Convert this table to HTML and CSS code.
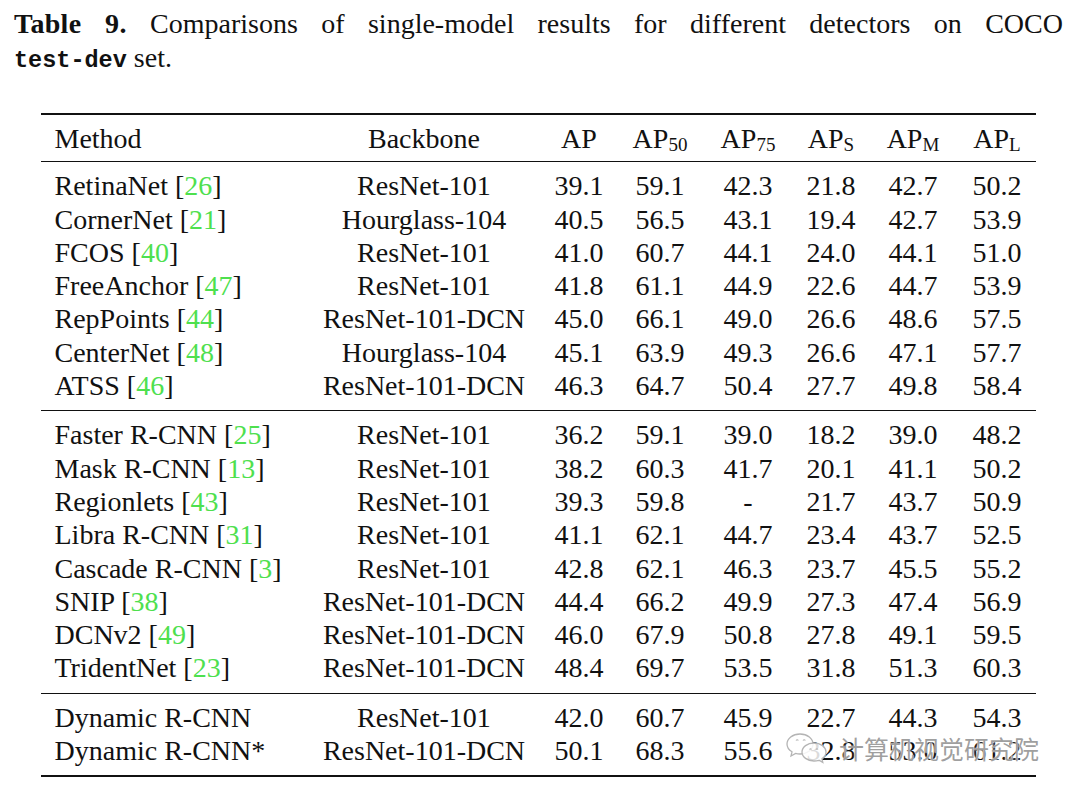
FILE: index.html
```html
<!DOCTYPE html>
<html lang="en">
<head>
<meta charset="utf-8">
<title>Table 9</title>
<link rel="stylesheet" href="styles.css">
</head>
<body>
<div class="page">
  <p class="caption"><span class="cap-line"><b class="cap-label">Table 9.</b> Comparisons of single-model results for different detectors on COCO</span><code class="tt">test-dev</code> set.</p>

  <div class="table">
    <div class="thead row">
      <div class="cell method">Method</div>
      <div class="cell">Backbone</div>
      <div class="cell">AP</div>
      <div class="cell">AP<sub>50</sub></div>
      <div class="cell">AP<sub>75</sub></div>
      <div class="cell">AP<sub>S</sub></div>
      <div class="cell">AP<sub>M</sub></div>
      <div class="cell">AP<sub>L</sub></div>
    </div>

    <div class="tgroup">
      <div class="row"><div class="cell method">RetinaNet [<span class="cite">26</span>]</div><div class="cell">ResNet-101</div><div class="cell">39.1</div><div class="cell">59.1</div><div class="cell">42.3</div><div class="cell">21.8</div><div class="cell">42.7</div><div class="cell">50.2</div></div>
      <div class="row"><div class="cell method">CornerNet [<span class="cite">21</span>]</div><div class="cell">Hourglass-104</div><div class="cell">40.5</div><div class="cell">56.5</div><div class="cell">43.1</div><div class="cell">19.4</div><div class="cell">42.7</div><div class="cell">53.9</div></div>
      <div class="row"><div class="cell method">FCOS [<span class="cite">40</span>]</div><div class="cell">ResNet-101</div><div class="cell">41.0</div><div class="cell">60.7</div><div class="cell">44.1</div><div class="cell">24.0</div><div class="cell">44.1</div><div class="cell">51.0</div></div>
      <div class="row"><div class="cell method">FreeAnchor [<span class="cite">47</span>]</div><div class="cell">ResNet-101</div><div class="cell">41.8</div><div class="cell">61.1</div><div class="cell">44.9</div><div class="cell">22.6</div><div class="cell">44.7</div><div class="cell">53.9</div></div>
      <div class="row"><div class="cell method">RepPoints [<span class="cite">44</span>]</div><div class="cell">ResNet-101-DCN</div><div class="cell">45.0</div><div class="cell">66.1</div><div class="cell">49.0</div><div class="cell">26.6</div><div class="cell">48.6</div><div class="cell">57.5</div></div>
      <div class="row"><div class="cell method">CenterNet [<span class="cite">48</span>]</div><div class="cell">Hourglass-104</div><div class="cell">45.1</div><div class="cell">63.9</div><div class="cell">49.3</div><div class="cell">26.6</div><div class="cell">47.1</div><div class="cell">57.7</div></div>
      <div class="row"><div class="cell method">ATSS [<span class="cite">46</span>]</div><div class="cell">ResNet-101-DCN</div><div class="cell">46.3</div><div class="cell">64.7</div><div class="cell">50.4</div><div class="cell">27.7</div><div class="cell">49.8</div><div class="cell">58.4</div></div>
    </div>

    <div class="tgroup">
      <div class="row"><div class="cell method">Faster R-CNN [<span class="cite">25</span>]</div><div class="cell">ResNet-101</div><div class="cell">36.2</div><div class="cell">59.1</div><div class="cell">39.0</div><div class="cell">18.2</div><div class="cell">39.0</div><div class="cell">48.2</div></div>
      <div class="row"><div class="cell method">Mask R-CNN [<span class="cite">13</span>]</div><div class="cell">ResNet-101</div><div class="cell">38.2</div><div class="cell">60.3</div><div class="cell">41.7</div><div class="cell">20.1</div><div class="cell">41.1</div><div class="cell">50.2</div></div>
      <div class="row"><div class="cell method">Regionlets [<span class="cite">43</span>]</div><div class="cell">ResNet-101</div><div class="cell">39.3</div><div class="cell">59.8</div><div class="cell">-</div><div class="cell">21.7</div><div class="cell">43.7</div><div class="cell">50.9</div></div>
      <div class="row"><div class="cell method">Libra R-CNN [<span class="cite">31</span>]</div><div class="cell">ResNet-101</div><div class="cell">41.1</div><div class="cell">62.1</div><div class="cell">44.7</div><div class="cell">23.4</div><div class="cell">43.7</div><div class="cell">52.5</div></div>
      <div class="row"><div class="cell method">Cascade R-CNN [<span class="cite">3</span>]</div><div class="cell">ResNet-101</div><div class="cell">42.8</div><div class="cell">62.1</div><div class="cell">46.3</div><div class="cell">23.7</div><div class="cell">45.5</div><div class="cell">55.2</div></div>
      <div class="row"><div class="cell method">SNIP [<span class="cite">38</span>]</div><div class="cell">ResNet-101-DCN</div><div class="cell">44.4</div><div class="cell">66.2</div><div class="cell">49.9</div><div class="cell">27.3</div><div class="cell">47.4</div><div class="cell">56.9</div></div>
      <div class="row"><div class="cell method">DCNv2 [<span class="cite">49</span>]</div><div class="cell">ResNet-101-DCN</div><div class="cell">46.0</div><div class="cell">67.9</div><div class="cell">50.8</div><div class="cell">27.8</div><div class="cell">49.1</div><div class="cell">59.5</div></div>
      <div class="row"><div class="cell method">TridentNet [<span class="cite">23</span>]</div><div class="cell">ResNet-101-DCN</div><div class="cell">48.4</div><div class="cell">69.7</div><div class="cell">53.5</div><div class="cell">31.8</div><div class="cell">51.3</div><div class="cell">60.3</div></div>
    </div>

    <div class="tgroup last">
      <div class="row"><div class="cell method">Dynamic R-CNN</div><div class="cell">ResNet-101</div><div class="cell">42.0</div><div class="cell">60.7</div><div class="cell">45.9</div><div class="cell">22.7</div><div class="cell">44.3</div><div class="cell">54.3</div></div>
      <div class="row"><div class="cell method">Dynamic R-CNN*</div><div class="cell">ResNet-101-DCN</div><div class="cell">50.1</div><div class="cell">68.3</div><div class="cell">55.6</div><div class="cell">32.8</div><div class="cell">53.0</div><div class="cell">61.2</div></div>
    </div>
  </div>

  <div class="watermark">
    <svg class="wm-icon" width="44" height="32" viewBox="0 0 44 32" aria-hidden="true">
      <path d="M15 2 C22.5 2 28 6.5 28 12 C28 17.5 22.5 22 15 22 C13.4 22 12 21.8 10.6 21.4 L6 24 L7 19.8 C3.9 18 2 15.2 2 12 C2 6.5 7.5 2 15 2 Z" fill="#fff" stroke="#b4b4b4" stroke-width="1.3"/>
      <path d="M11 8.5 q1.2 -1.5 2.4 0 M18 8.5 q1.2 -1.5 2.4 0" fill="none" stroke="#b4b4b4" stroke-width="1.1"/>
      <path d="M29 11 C35.6 11 41 15 41 20 C41 22.9 39.4 25.3 37 26.9 L37.8 30.4 L34 28.3 C32.5 28.7 30.8 29 29 29 C22.4 29 17 25 17 20 C17 15 22.4 11 29 11 Z" fill="#fff" fill-opacity="0.85" stroke="#b4b4b4" stroke-width="1.3"/>
      <path d="M24.5 17.5 q1 -1.3 2 0 M31 17.5 q1 -1.3 2 0" fill="none" stroke="#b4b4b4" stroke-width="1.1"/>
    </svg>
    <span class="wm-text">计算机视觉研究院</span>
  </div>
</div>
</body>
</html>
```

FILE: styles.css
```css
html, body {
  margin: 0;
  padding: 0;
  background: #ffffff;
}

body {
  font-family: "Liberation Serif", "Times New Roman", serif;
  color: #111111;
  font-size: 28px;
}

.page {
  position: relative;
  width: 1080px;
  height: 796px;
  overflow: hidden;
}

.caption {
  margin: 7px 0 0 14px;
  width: 1049px;
  line-height: 33.5px;
  font-size: 28px;
}

.cap-line {
  display: block;
  text-align: justify;
  text-align-last: justify;
}

.cap-label {
  font-weight: bold;
  letter-spacing: 0.3px;
}

.tt {
  font-family: "Liberation Mono", "DejaVu Sans Mono", monospace;
  font-weight: bold;
  font-size: 23.5px;
  line-height: 1;
}

.table {
  margin: 39px 0 0 41px;
  width: 995px;
  border-top: 2px solid #111111;
  border-bottom: 2px solid #111111;
}

.row {
  display: grid;
  grid-template-columns: 267px 232px 78px 84px 92px 74px 90px 78px;
  height: 33.3px;
  line-height: 33.3px;
  white-space: nowrap;
}

.thead {
  box-sizing: content-box;
  padding: 7px 0 6px;
  border-bottom: 1px solid #111111;
}

.tgroup {
  padding: 7px 0 8px;
  border-bottom: 1px solid #111111;
}

.tgroup.last {
  border-bottom: none;
}

.cell {
  text-align: center;
}

.cell.method {
  text-align: left;
  padding-left: 13.5px;
}

sub {
  font-size: 19px;
  vertical-align: -3px;
  line-height: 0;
}

.cite {
  color: #4ee04e;
}

.watermark {
  position: absolute;
  left: 785px;
  top: 732px;
  display: flex;
  align-items: center;
  gap: 10px;
}

.wm-icon {
  display: block;
}

.wm-text {
  font-family: "Noto Sans CJK SC", sans-serif;
  font-size: 25px;
  line-height: 30px;
  color: rgba(128, 128, 128, 0.75);
  text-shadow: 0 0 2px rgba(255, 255, 255, 0.9), 0 0 1px rgba(255, 255, 255, 0.9);
  letter-spacing: 0;
}
```
